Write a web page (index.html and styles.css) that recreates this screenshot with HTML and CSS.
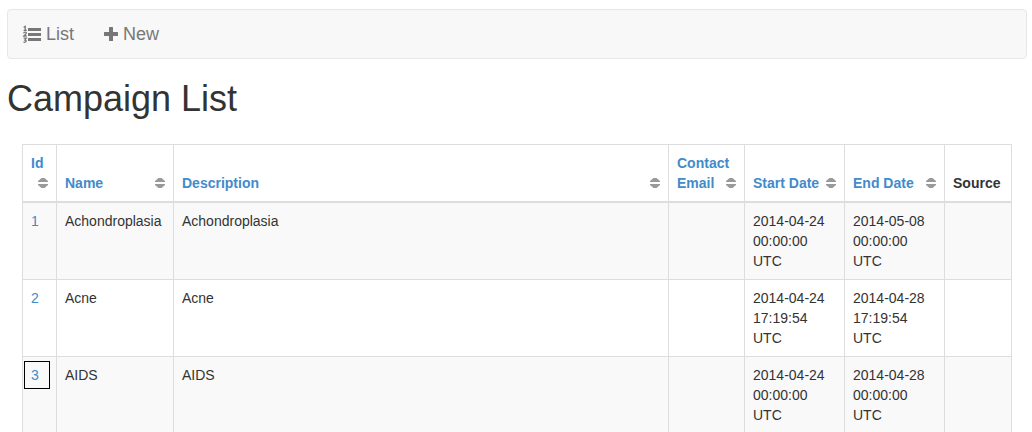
FILE: index.html
```html
<!DOCTYPE html>
<html lang="en">
<head>
<meta charset="utf-8">
<title>Campaign List</title>
<link rel="stylesheet" href="styles.css">
</head>
<body>
<svg class="defs" aria-hidden="true">
  <symbol id="sort" viewBox="0 0 10 10"><path d="M3.500 0h3L10 3v1H0V3zM0 6h10v1L6.500 10h-3L0 7z"/></symbol>
</svg>
<nav class="navbar">
  <a class="nav-link" href="#">
    <svg class="icon icon-list" viewBox="0 0 18 20" aria-hidden="true">
      <path d="M5 4h13v3H5zM5 9h13v3H5zM5 14h13v3H5z"/>
      <path class="digits" d="M.6 3.200 2.200 2.300v3.900M.6 6.400h3.200M.7 9.300c0-1.700 2.600-1.600 2.600-.2 0 1.100-1.800 1.700-2.500 2.900h2.900M.6 14.200h2.600L1.900 16c2 0 1.700 2.700-1.400 2.200"/>
    </svg>
    <span>List</span>
  </a>
  <a class="nav-link" href="#">
    <svg class="icon icon-plus" viewBox="0 0 14 14" aria-hidden="true"><path d="M5.500 0h3q.5 0 .5.5V5h4.500q.5 0 .5.5v3q0 .5-.5.5H9v4.500q0 .5-.5.5h-3q-.5 0-.5-.5V9H.5Q0 9 0 8.500v-3Q0 5 .5 5H5V.5Q5 0 5.500 0z"/></svg>
    <span>New</span>
  </a>
</nav>
<main>
  <h1 class="title">Campaign List</h1>
  <div class="table-wrap">
    <table class="grid">
      <colgroup>
        <col class="col-id"><col class="col-name"><col><col class="col-email"><col class="col-date"><col class="col-date"><col class="col-source">
      </colgroup>
      <thead>
        <tr>
          <th scope="col"><a href="#">Id</a><svg class="sort"><use href="#sort"/></svg></th>
          <th scope="col"><a href="#">Name</a><svg class="sort"><use href="#sort"/></svg></th>
          <th scope="col"><a href="#">Description</a><svg class="sort"><use href="#sort"/></svg></th>
          <th scope="col"><a href="#">Contact Email</a><svg class="sort"><use href="#sort"/></svg></th>
          <th scope="col"><a href="#">Start Date</a><svg class="sort"><use href="#sort"/></svg></th>
          <th scope="col"><a href="#">End Date</a><svg class="sort"><use href="#sort"/></svg></th>
          <th scope="col">Source</th>
        </tr>
      </thead>
      <tbody>
        <tr><td><a href="#">1</a></td><td>Achondroplasia</td><td>Achondroplasia</td><td></td><td>2014-04-24 00:00:00 UTC</td><td>2014-05-08 00:00:00 UTC</td><td></td></tr>
        <tr><td><a href="#">2</a></td><td>Acne</td><td>Acne</td><td></td><td>2014-04-24 17:19:54 UTC</td><td>2014-04-28 17:19:54 UTC</td><td></td></tr>
        <tr><td><a class="selected" href="#">3</a></td><td>AIDS</td><td>AIDS</td><td></td><td>2014-04-24 00:00:00 UTC</td><td>2014-04-28 00:00:00 UTC</td><td></td></tr>
      </tbody>
    </table>
  </div>
</main>
</body>
</html>
```

FILE: styles.css
```css
* { box-sizing: border-box; }
body {
  margin: 0;
  padding: 9px 5px 0 7px;
  background: #fff;
  color: #333;
  font: 14px/20px "Liberation Sans", Arial, sans-serif;
}
a { color: #428bca; text-decoration: none; }
.defs { display: none; }
.navbar {
  display: flex;
  background: #f8f8f8;
  border: 1px solid #e7e7e7;
  border-radius: 4px;
}
.nav-link {
  display: flex;
  align-items: center;
  gap: 5px;
  padding: 14px 15px;
  color: #777;
  font-size: 18px;
}
.icon { fill: currentColor; overflow: visible; }
.icon-list { width: 18px; height: 20px; }
.icon-plus { width: 14px; height: 14px; }
.icon .digits { fill: none; stroke: currentColor; stroke-width: 1.3; }
.title {
  margin: 20px 0 25px;
  font-size: 36px;
  line-height: 40px;
  font-weight: 400;
}
.table-wrap { padding: 0 15px; }
.grid {
  width: 100%;
  table-layout: fixed;
  border-collapse: collapse;
  border: 1px solid #ddd;
}
.col-id { width: 34px; }
.col-name { width: 117px; }
.col-email { width: 76px; }
.col-date { width: 100px; }
.col-source { width: 67px; }
.grid th, .grid td {
  padding: 8px;
  border: 1px solid #ddd;
  text-align: left;
  vertical-align: top;
}
.grid th { vertical-align: bottom; border-bottom-width: 2px; }
.grid tbody tr:nth-child(odd) { background: #f9f9f9; }
.sort {
  float: right;
  width: 10px;
  height: 10px;
  margin: 5px 0;
  fill: #999;
}
.selected {
  display: block;
  margin: 0 2px 0 -3px;
  padding-left: 3px;
  outline: 1px solid #000;
  outline-offset: 3px;
}
```
